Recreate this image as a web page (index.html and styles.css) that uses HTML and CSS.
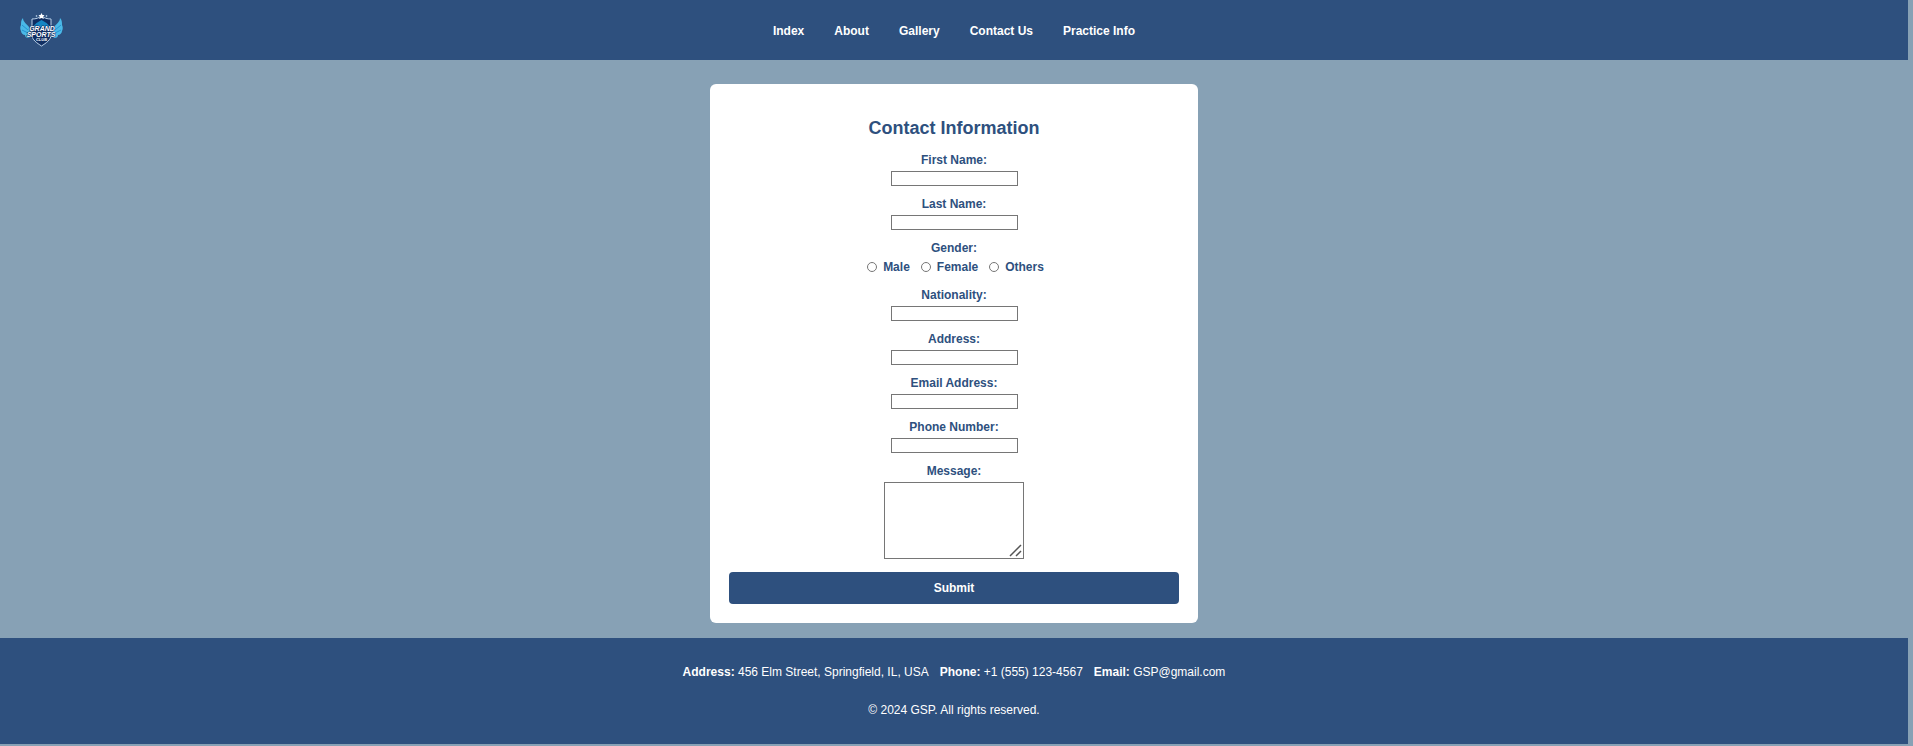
FILE: index.html
```html
<!DOCTYPE html>
<html lang="en">
<head>
<meta charset="utf-8">
<meta name="viewport" content="width=device-width, initial-scale=1">
<title>Contact Us</title>
<link rel="stylesheet" href="styles.css">
</head>
<body>
<header class="site-header">
  <a class="logo" href="#" aria-label="Grand Sports Club">
    <svg width="44" height="36" viewBox="0 0 44 36">
      <path d="M3 6c0 4 4 6 6 9l2 9-2 2c-3 0-4-1-4-3-2 0-4-2-4-4-1-2-1-4 0-6 0-3 0-5 2-7z" fill="#4ab9e8"/>
      <path d="M40 6c0 4-4 6-6 9l-2 9 2 2c3 0 4-1 4-3 2 0 4-2 4-4 1-2 1-4 0-6 0-3 0-5-2-7z" fill="#4ab9e8"/>
      <path d="M2 13l6 5M2 18l6 3M41 13l-6 5M41 18l-6 3" stroke="#2792d0"/>
      <path d="M12 7c4 0 7-1 9.500-3 2.500 2 5.500 3 9.500 3v16c0 5-5 8-9.500 11-4.500-3-9.500-6-9.500-11z" fill="#102e62" stroke="#bcd3ea"/>
      <path d="M12.500 15l4-4 5-3 5 3 4 4z" fill="#1686c4"/>
      <path d="M21.500 1l1 2h2l-1.500 2 1 2-2.500-1-2.500 1 1-2-1.500-2h2z" fill="#fff"/>
      <path d="M16.500 3l1 1-1 1-1-1zM26.500 3l1 1-1 1-1-1z" fill="#bcd3ea"/>
      <g class="logo-text" text-anchor="middle">
        <text x="22" y="19" font-size="7">GRAND</text>
        <text x="21" y="25" font-size="7">SPORTS</text>
        <text x="21.500" y="29" font-size="4">CLUB</text>
      </g>
    </svg>
  </a>
  <nav class="nav">
    <a href="#">Index</a>
    <a href="#">About</a>
    <a href="#">Gallery</a>
    <a href="#">Contact Us</a>
    <a href="#">Practice Info</a>
  </nav>
</header>
<main class="main">
  <form class="card">
    <h2 class="title">Contact Information</h2>
    <div class="field"><label for="first">First Name:</label><input class="box" id="first" type="text"></div>
    <div class="field"><label for="last">Last Name:</label><input class="box" id="last" type="text"></div>
    <div class="field" role="radiogroup" aria-labelledby="gender">
      <span id="gender">Gender:</span>
      <div class="radios">
        <label class="radio"><input type="radio" name="gender">Male</label>
        <label class="radio"><input type="radio" name="gender">Female</label>
        <label class="radio"><input type="radio" name="gender">Others</label>
      </div>
    </div>
    <div class="field"><label for="nationality">Nationality:</label><input class="box" id="nationality" type="text"></div>
    <div class="field"><label for="address">Address:</label><input class="box" id="address" type="text"></div>
    <div class="field"><label for="email">Email Address:</label><input class="box" id="email" type="email"></div>
    <div class="field"><label for="phone">Phone Number:</label><input class="box" id="phone" type="tel"></div>
    <div class="field"><label for="message">Message:</label><textarea class="box message" id="message"></textarea></div>
    <button class="submit" type="submit">Submit</button>
  </form>
</main>
<footer class="footer">
  <div class="contacts">
    <span><strong>Address:</strong> 456 Elm Street, Springfield, IL, USA</span>
    <span><strong>Phone:</strong> +1 (555) 123-4567</span>
    <span><strong>Email:</strong> GSP@gmail.com</span>
  </div>
  <div>© 2024 GSP. All rights reserved.</div>
</footer>
</body>
</html>
```

FILE: styles.css
```css
* { box-sizing: border-box; }
body {
  margin: 0 5px 0 0;
  background: #87a1b5;
  font: 12px/14px "Liberation Sans", Arial, sans-serif;
}
.site-header {
  display: grid;
  grid-template-columns: 1fr auto 1fr;
  align-items: center;
  padding: 12px 20px;
  background: #2e507e;
}
.logo, .logo svg { display: block; }
.logo { justify-self: start; }
.logo-text {
  fill: #fff;
  stroke: #102e62;
  stroke-width: 1px;
  paint-order: stroke;
  font-weight: bold;
  font-style: italic;
}
.nav { display: flex; gap: 30px; padding-top: 2px; }
.nav a { color: #fff; font-weight: bold; text-decoration: none; }
.main { padding: 24px 16px 15px; }
.card {
  display: flex;
  flex-direction: column;
  gap: 11px;
  max-width: 488px;
  margin: 0 auto;
  padding: 19px;
  border-radius: 6px;
  background: #fff;
  color: #2e507e;
  font-weight: bold;
}
.title { margin: 15px 0 4px; font-size: 18px; line-height: 20px; text-align: center; }
.field { display: flex; flex-direction: column; align-items: center; gap: 4px; }
.radios { display: flex; gap: 11px; padding: 0 0 2px 3px; }
.radio { display: flex; align-items: center; gap: 6px; line-height: 16px; }
.radio input { width: 10px; height: 10px; margin: 0; }
.box {
  width: 127px;
  height: 15px;
  padding: 1px 2px;
  border: 1px solid #767676;
  background: #fff;
  font: inherit;
}
.message { width: 140px; height: 77px; resize: both; }
.message::-webkit-resizer {
  background: url("data:image/svg+xml,%3Csvg xmlns='http://www.w3.org/2000/svg' width='15' height='15'%3E%3Cpath d='M2 13L13 2M8 13l5-5' stroke='%23555' stroke-width='1.500'/%3E%3C/svg%3E") no-repeat right bottom;
}
.submit {
  margin-top: 2px;
  padding: 9px;
  border: 0;
  border-radius: 4px;
  background: #2e507e;
  color: #fff;
  font: inherit;
}
.footer {
  display: flex;
  flex-direction: column;
  align-items: center;
  gap: 24px;
  padding: 27px 16px;
  background: #2e507e;
  color: #fff;
}
.contacts { display: flex; flex-wrap: wrap; justify-content: center; gap: 11px; }
```
